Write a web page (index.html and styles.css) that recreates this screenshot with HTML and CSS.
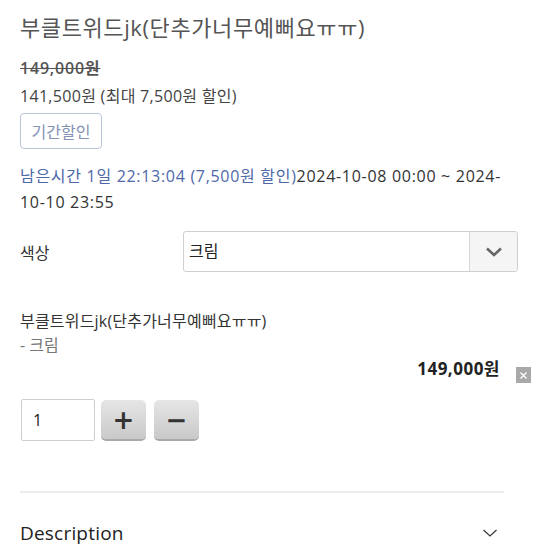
FILE: index.html
```html
<!DOCTYPE html>
<html lang="ko">
<head>
  <meta charset="utf-8">
  <title>부클트위드jk</title>
  <link rel="stylesheet" href="styles.css">
</head>
<body>
  <div class="product">
    <h1 class="title">부클트위드jk(단추가너무예뻐요ㅠㅠ)</h1>
    <div class="old-price">149,000원</div>
    <div class="price">141,500원 (최대 7,500원 할인)</div>
    <button class="tag-btn">기간할인</button>

    <p class="timer"><span class="timer-left">남은시간 1일 22:13:04 (7,500원 할인)</span>2024-10-08 00:00 ~ 2024-<br>10-10 23:55</p>

    <div class="option-row">
      <label class="option-label" for="color">색상</label>
      <div class="select">
        <span class="select-value">크림</span>
        <span class="select-arrow">
          <svg width="18" height="12" viewBox="0 0 18 12"><path d="M2 2.5 L9 9 L16 2.5" fill="none" stroke="#666" stroke-width="2.6"/></svg>
        </span>
      </div>
    </div>

    <div class="selected">
      <div class="selected-name">부클트위드jk(단추가너무예뻐요ㅠㅠ)</div>
      <div class="selected-opt">- 크림</div>
      <div class="selected-price">
        <strong>149,000원</strong>
        <span class="remove">
          <svg width="9" height="9" viewBox="0 0 9 9"><path d="M1.5 1.5 L7.5 7.5 M7.5 1.5 L1.5 7.5" stroke="#fff" stroke-width="1.3"/></svg>
        </span>
      </div>
      <div class="qty">
        <input class="qty-input" type="text" value="1">
        <button class="qty-btn">+</button>
        <button class="qty-btn">&minus;</button>
      </div>
    </div>

    <hr class="divider">

    <div class="accordion">
      <span>Description</span>
      <svg width="16" height="10" viewBox="0 0 16 10"><path d="M1.5 2 L8 8 L14.5 2" fill="none" stroke="#333" stroke-width="1.2"/></svg>
    </div>
  </div>
</body>
</html>
```

FILE: styles.css
```css
body {
  margin: 0;
  background: #fff;
  font-family: "Open Sans", "Noto Sans CJK KR", sans-serif;
  color: #333;
}

.product {
  padding: 0 20px;
}

.title {
  margin: 12px 0 0;
  font-size: 22px;
  line-height: 30px;
  font-weight: 400;
  letter-spacing: 0.6px;
  color: #555;
}

.old-price {
  margin-top: 12px;
  font-size: 16px;
  line-height: 28px;
  font-weight: 600;
  letter-spacing: 0.8px;
  color: #555;
  text-decoration: line-through;
}

.price {
  font-size: 16px;
  line-height: 28px;
  letter-spacing: 0.3px;
  color: #444;
}

.tag-btn {
  display: block;
  margin-top: 3px;
  width: 82px;
  height: 36px;
  padding: 0;
  background: #fff;
  border: 1px solid #b9c5d9;
  border-radius: 4px;
  font-family: inherit;
  font-size: 16px;
  color: #8392b4;
}

.timer {
  margin: 14px 0 0;
  font-size: 16px;
  line-height: 26px;
  letter-spacing: 0.7px;
  color: #333;
}

.timer-left {
  color: #4e68a8;
}

.option-row {
  display: grid;
  grid-template-columns: 163px 335px;
  align-items: center;
  margin-top: 16px;
}

.option-label {
  font-size: 16px;
  color: #333;
}

.select {
  display: flex;
  height: 41px;
  box-sizing: border-box;
  border: 1px solid #cfcfcf;
  border-radius: 3px;
  overflow: hidden;
}

.select-value {
  flex: 1;
  padding-left: 5px;
  font-size: 16px;
  line-height: 39px;
  color: #222;
}

.select-arrow {
  display: flex;
  align-items: center;
  justify-content: center;
  width: 47px;
  background: #f5f5f5;
  border-left: 1px solid #d6d6d6;
}

.selected {
  margin-top: 37px;
}

.selected-name {
  font-size: 16px;
  line-height: 24px;
  letter-spacing: 0.2px;
  color: #333;
}

.selected-opt {
  font-size: 16px;
  line-height: 24px;
  color: #777;
}

.selected-price {
  display: flex;
  justify-content: flex-end;
  align-items: flex-start;
  margin-right: 3px;
  line-height: 24px;
}

.selected-price strong {
  font-size: 17px;
  font-weight: 700;
  letter-spacing: 0.5px;
  color: #222;
}

.remove {
  display: flex;
  align-items: center;
  justify-content: center;
  width: 15px;
  height: 16px;
  margin: 10px 0 0 16px;
  background: #a9a9a9;
}

.qty {
  display: flex;
  align-items: flex-start;
  gap: 6px;
  margin-top: 16px;
}

.qty-input {
  width: 74px;
  height: 42px;
  box-sizing: border-box;
  margin-left: 1px;
  padding: 0 11px;
  border: 1px solid #cfcfcf;
  border-radius: 2px;
  font-family: inherit;
  font-size: 16px;
  color: #222;
}

.qty-btn {
  width: 45px;
  height: 39px;
  margin-top: 1px;
  padding: 0;
  border: 0;
  border-radius: 5px;
  background: linear-gradient(#e6e6e6, #c9c9c9);
  box-shadow: 0 2px 0 #a9a9a9;
  font-family: "DejaVu Sans", sans-serif;
  font-size: 26px;
  font-weight: 700;
  line-height: 36px;
  color: #333;
}

.qty-btn + .qty-btn {
  margin-left: 2px;
}

.divider {
  width: 484px;
  margin: 50px 0 0;
  border: 0;
  border-top: 2px solid #ececec;
}

.accordion {
  display: flex;
  justify-content: space-between;
  align-items: center;
  width: 478px;
  margin-top: 27px;
  font-size: 19px;
  letter-spacing: 0.2px;
  color: #222;
}
```
